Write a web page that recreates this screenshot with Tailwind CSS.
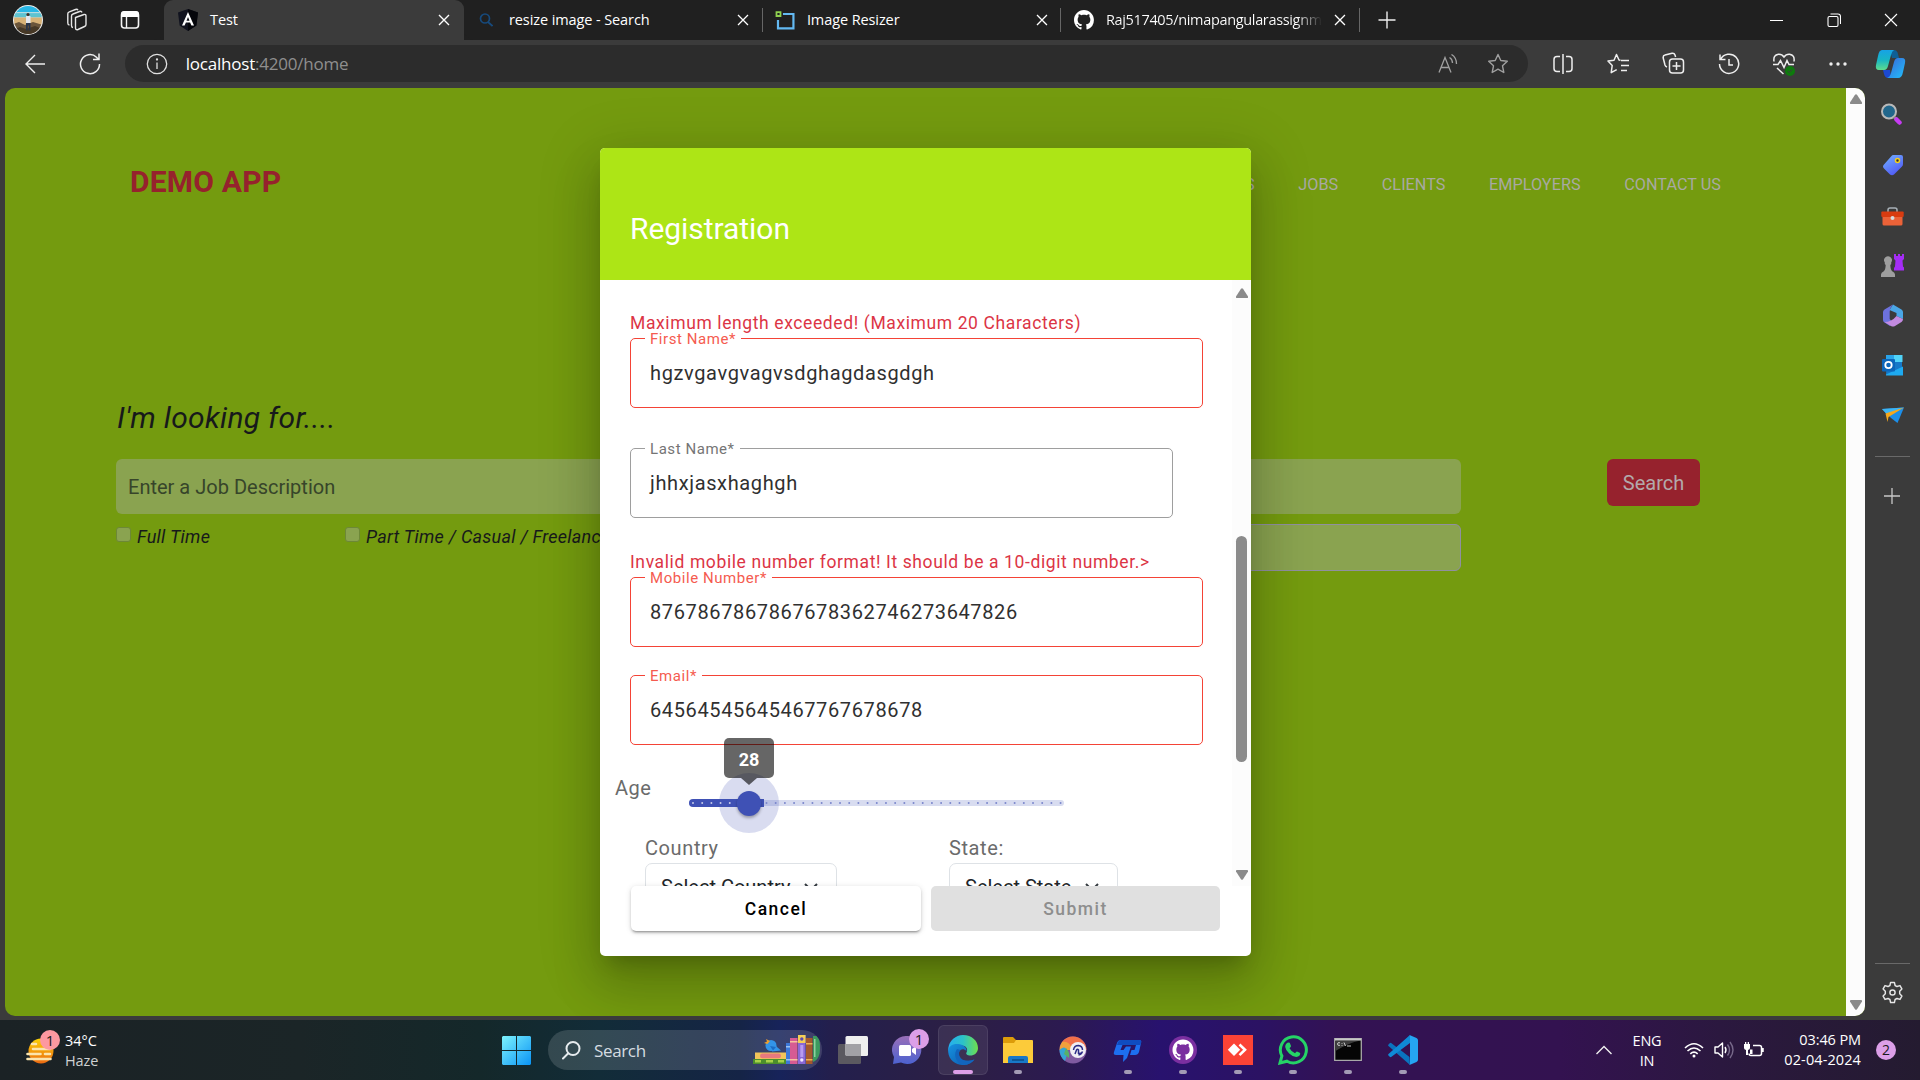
<!DOCTYPE html>
<html lang="en">
<head>
<meta charset="utf-8">
<title>Test</title>
<script src="https://cdn.jsdelivr.net/npm/@tailwindcss/browser@4"></script>
</head>
<body class="w-[1920px] h-[1080px] overflow-hidden flex flex-col bg-[#3b3b3b] font-['Open_Sans',sans-serif] text-white">

<!-- Tab strip -->
<header class="h-10 flex bg-[#202020] text-[14.5px] tracking-[-0.1px] shrink-0">
  <div class="w-[164px] flex items-center pl-[13px] bg-[#202020] rounded-br-[10px]">
    <svg class="w-[30px] h-[30px]" viewBox="0 0 30 30"><defs><clipPath id="av"><circle cx="15" cy="15" r="14"/></clipPath></defs><circle cx="15" cy="15" r="15" fill="#eee"/><g clip-path="url(#av)"><path fill="#28b7e6" d="M0 0h30v11H0z"/><path fill="#b7dbe0" d="M0 7h30v1.500H0z"/><path fill="#5fc3cf" d="M0 8.500h30v4H0z"/><path fill="#d8b277" d="M0 12.500h30v8H0z"/><path fill="#6a553b" d="M0 19l6-2 6 3 8-3 10 3v11H0z"/><path fill="#463826" d="M0 25l7-3 6 2 9-3 8 3v7H0z"/><circle cx="15" cy="9.500" r="1.600" fill="#43302a"/><path fill="#e4e7ef" d="M13 11h4.500v7H13z"/><path fill="#29354a" d="M13 18h4.500v7.500h-1.800v-5h-.9v5H13z"/></g></svg>
    <svg class="w-6 h-6 ml-[22px]" viewBox="0 0 24 24" fill="none" stroke="#e6e6e6" stroke-width="1.400" stroke-linejoin="round"><path d="M10.500 9.500 19 6.500q2-.5 2 1.500v8.500q0 1.500-1.500 2l-6.500 3q-2.500.8-2.500-1.800z"/><path d="M8 19.500q-1.500-.2-1.500-2V8q0-1.500 1.500-2l6.500-2.500q2-.6 2.500 1"/><path d="M4.500 17q-1.700-.2-1.700-2V5.800q0-1.500 1.500-2L10.500 1.500q1.800-.6 2.500.8"/></svg>
    <svg class="w-5 h-5 ml-[31px]" viewBox="0 0 20 20"><rect x="1.500" y="2" width="17" height="16" rx="3" fill="none" stroke="#f4f4f4" stroke-width="1.600"/><path d="M1 7V4q0-3 3-3h12q3 0 3 3v3z" fill="#fff"/><path d="M6.500 7v11" stroke="#f4f4f4" stroke-width="1.400"/></svg>
  </div>
  <div class="w-[300px] bg-[#3b3b3b] rounded-t-[9px] flex items-center pl-3.5">
    <svg class="w-5 h-[22px]" viewBox="0 0 20 22"><path fill="#11131f" d="M10 0l10 3.500-1.600 13L10 22l-8.400-5.500L0 3.500z"/><path fill="#05060b" d="M10 0l10 3.500-1.600 13L10 22z"/><path fill="#fff" fill-rule="evenodd" d="M10 3l6 13.500h-2.600L12.100 13.500H7.900L6.600 16.500H4zm0 5l-1.500 3.700h3z"/></svg>
    <span class="ml-3 w-[228px]">Test</span>
    <svg class="w-3 h-3" viewBox="0 0 12 12" stroke="#fff" stroke-width="1.400"><path d="M1 1l10 10M11 1L1 11"/></svg>
  </div>
  <div class="w-[299px] bg-[#202020] rounded-bl-[10px] flex items-center pl-[15px]">
    <svg class="w-3.5 h-3.5" viewBox="0 0 14 14" fill="none" stroke="#174a7c" stroke-width="1.700"><circle cx="6" cy="5.500" r="4.500"/><path d="M9 9l4.500 4"/></svg>
    <span class="ml-4 w-[228px]">resize image - Search</span>
    <svg class="w-3 h-3" viewBox="0 0 12 12" stroke="#fff" stroke-width="1.300"><path d="M1 1l10 10M11 1L1 11"/></svg>
    <span class="w-px h-6 bg-[#666] ml-[13px]"></span>
  </div>
  <div class="w-[298px] flex items-center pl-3">
    <svg class="w-5 h-5" viewBox="0 0 20 20" fill="none"><path d="M8 4h10.500v14.500H3V10" stroke="#63b9f2" stroke-width="2.200"/><path d="M1.500 2h4v4h-4z" stroke="#8fd14f" stroke-width="1.800"/></svg>
    <span class="ml-3 w-[230px]">Image Resizer</span>
    <svg class="w-3 h-3" viewBox="0 0 12 12" stroke="#fff" stroke-width="1.300"><path d="M1 1l10 10M11 1L1 11"/></svg>
    <span class="w-px h-6 bg-[#666] ml-3"></span>
  </div>
  <div class="w-[299px] flex items-center pl-[13px]">
    <svg class="w-5 h-5" viewBox="0 0 16 16" fill="#fff"><path d="M8 0C3.580 0 0 3.580 0 8c0 3.540 2.290 6.530 5.470 7.590.4.070.55-.17.55-.38 0-.19-.01-.82-.01-1.490-2.010.37-2.530-.49-2.690-.94-.09-.23-.48-.94-.82-1.130-.28-.15-.68-.52-.01-.53.63-.01 1.080.58 1.230.82.72 1.210 1.870.87 2.330.66.070-.52.28-.87.51-1.070-1.780-.2-3.640-.89-3.640-3.950 0-.87.31-1.590.82-2.150-.08-.2-.36-1.020.08-2.120 0 0 .67-.21 2.200.82.64-.18 1.320-.27 2-.27s1.360.09 2 .27c1.530-1.040 2.200-.82 2.200-.82.44 1.100.16 1.920.08 2.120.51.56.82 1.270.82 2.150 0 3.070-1.870 3.750-3.650 3.950.29.25.54.73.54 1.480 0 1.070-.01 1.930-.01 2.200 0 .21.15.46.55.38A8 8 0 0 0 16 8c0-4.420-3.580-8-8-8z"/></svg>
    <span class="ml-3 w-[217px] overflow-hidden whitespace-nowrap tracking-[-0.34px] bg-linear-to-r from-white from-88% to-transparent bg-clip-text text-transparent">Raj517405/nimapangularassignm</span>
    <svg class="w-3 h-3 ml-3" viewBox="0 0 12 12" stroke="#fff" stroke-width="1.300"><path d="M1 1l10 10M11 1L1 11"/></svg>
    <span class="w-px h-6 bg-[#666] ml-[13px]"></span>
  </div>
  <svg class="w-[18px] h-[18px] ml-[18px] mt-[11px]" viewBox="0 0 18 18" stroke="#eee" stroke-width="1.400"><path d="M9 .5v17M.5 9h17"/></svg>
  <div class="ml-auto flex items-center pr-[22px] gap-[43px]">
    <svg class="w-3.5 h-3.5" viewBox="0 0 14 14" stroke="#fff"><path d="M0 7.500h13"/></svg>
    <svg class="w-3.5 h-3.5" viewBox="0 0 14 14" fill="none" stroke="#fff" stroke-width="1.100"><rect x="1" y="3.500" width="10" height="10" rx="1.500"/><path d="M3.500 1h7.500q2.500 0 2.500 2.500V11"/></svg>
    <svg class="w-3.5 h-3.5" viewBox="0 0 14 14" stroke="#fff" stroke-width="1.100"><path d="M1 1l12 12M13 1L1 13"/></svg>
  </div>
</header>

<!-- Address bar -->
<div class="h-12 flex items-center shrink-0 pb-px">
  <div class="w-[70px] flex justify-center"><svg class="w-5 h-5" viewBox="0 0 20 20" fill="none" stroke="#eee" stroke-width="1.400"><path d="M20 10H1M10 1L1 10l9 9"/></svg></div>
  <div class="w-10 flex justify-center"><svg class="w-[22px] h-[22px]" viewBox="0 0 22 22" fill="none" stroke="#eee" stroke-width="1.500"><path d="M20.500 11A9.500 9.500 0 1 1 17.500 4.200L19.500 6.500M20 .5v6h-6"/></svg></div>
  <div class="ml-[15px] w-[1406px] h-[37px] rounded-full bg-[#2c2c2c] flex items-center pl-[21px]">
    <svg class="w-[22px] h-[22px]" viewBox="0 0 22 22" fill="none" stroke="#e0e0e0" stroke-width="1.300"><circle cx="11" cy="11" r="9.700"/><path d="M11 9.500v6.500"/><circle cx="11" cy="6.500" r=".5" fill="#e0e0e0"/></svg>
    <span class="ml-[18px] text-[17px] tracking-[-0.22px]">localhost<span class="text-[#8f8f8f]">:4200/home</span></span>
    <svg class="w-5 h-5 ml-auto" viewBox="0 0 20 20" fill="none" stroke="#a0a0a0" stroke-width="1.300"><path d="M1 18.500L7 3.500l6 15M3 13.500h8M11.500 3.500q3 1.800 3 5.500M13.500.5q5 3 5 9.500"/></svg>
    <svg class="w-[22px] h-[22px] ml-[29px] mr-[19px]" viewBox="0 0 22 22" fill="none" stroke="#a0a0a0" stroke-width="1.400" stroke-linejoin="round"><path d="M11 1.500l2.800 6 6.500.8-4.800 4.500 1.300 6.700L11 16.200l-5.800 3.300 1.300-6.700L1.700 8.300l6.500-.8z"/></svg>
  </div>
  <div class="ml-[7px] grid grid-cols-[repeat(7,55px)] justify-items-center items-center">
    <svg class="w-5 h-[22px]" viewBox="0 0 20 22" fill="none" stroke="#eee" stroke-width="1.500"><path d="M10 1v20M7 3.500H4q-3 0-3 3v9q0 3 3 3h3M13 3.500h3q3 0 3 3v9q0 3-3 3h-3"/></svg>
    <svg class="w-[22px] h-[22px]" viewBox="0 0 22 22" fill="none" stroke="#eee" stroke-width="1.500" stroke-linejoin="round"><path d="M13.500 7.300L12 7 9.500 1.500 7 7.200l-6 .9 4.200 4.400-1 7.200 5.500-3"/><path d="M14 7.500h8M14 12.500h8M14 17.500h6"/></svg>
    <svg class="w-[23px] h-[23px] ml-0.5" viewBox="0 0 23 23" fill="none" stroke="#eee" stroke-width="1.500"><path d="M5 15Q3.500 14.500 3 13L1.200 6Q.8 3.500 3 3L10 1.200Q12.300.8 13 3L13.600 5"/><rect x="7.500" y="7" width="14" height="14" rx="3"/><path d="M14.500 10v8M10.500 14h8"/></svg>
    <svg class="w-[22px] h-[22px] ml-0.5" viewBox="0 0 22 22" fill="none" stroke="#eee" stroke-width="1.500"><path d="M2.500 6.500A9.600 9.600 0 1 1 1.500 11M2 1.500v5h5.500M11 6v6h4"/></svg>
    <svg class="w-6 h-6 ml-0.5" viewBox="0 0 24 24" fill="none" stroke="#eee" stroke-width="1.500"><path d="M2 9.500Q1 3 6.500 2.200 10 2 12 5q2-3 5.500-2.800Q23 3 22 9.500M1 12.500h5l2.500-4 3.500 7 3-7 2 4h5M5 16l6.500 6"/><circle cx="18" cy="19" r="5" fill="#0e7a0d" stroke="none"/><path d="M15.800 19l1.500 1.500 3-3" stroke="#3b3b3b" stroke-width="1"/></svg>
    <svg class="w-5 h-1.5" viewBox="0 0 20 6" fill="#eee"><circle cx="3" cy="3" r="1.700"/><circle cx="10" cy="3" r="1.700"/><circle cx="17" cy="3" r="1.700"/></svg>
    <svg class="w-[31px] h-[30px] mr-1" viewBox="0 0 31 30"><defs><linearGradient id="c1" x2="0" y2="1"><stop stop-color="#17a2e6"/><stop offset=".5" stop-color="#18b5c4"/><stop offset="1" stop-color="#5fdc8c"/></linearGradient><linearGradient id="c2" x2="1" y2="1"><stop stop-color="#3a64d8"/><stop offset="1" stop-color="#21c0fb"/></linearGradient></defs><path fill="#0f5f96" d="M15 1h4q3 0 4 4l1 4h-7z"/><path fill="#1c49d2" d="M8 21h7l1 8h-3q-3 0-4-4z"/><path fill="url(#c1)" d="M7 1h12q-2 1-3 5l-3 11q-1 4-4 4H4q-4 0-3-5L3 7Q4 1 7 1z"/><path fill="url(#c2)" d="M23 9h4q4 0 3 5l-2 9q-1 6-5 6H12q3-1 4-5l3-11q1-4 4-4z"/></svg>
  </div>
</div>

<div class="flex h-[932px] shrink-0 pl-[5px]">
  <!-- Page viewport -->
  <main class="relative w-[1860px] h-[928px] rounded-[10px] overflow-hidden flex bg-[#749b0f] font-[Roboto,sans-serif]">
    <div class="w-[1841px] pl-[111px] pt-[75px]">
      <nav class="h-[38px] flex items-start justify-between pl-[14px] pr-[125px]">
        <h1 class="text-[30px] leading-[38px] font-bold text-[#96222d] tracking-[0.2px]">DEMO APP</h1>
        <ul class="flex gap-[43.500px] mt-2.5 leading-6 text-[16.200px] text-[#a9a9a2] tracking-[0.06px]">
          <li>SERVICES</li><li>JOBS</li><li>CLIENTS</li><li>EMPLOYERS</li><li>CONTACT US</li>
        </ul>
      </nav>
      <h2 class="mt-[198px] pl-px text-[30px] leading-[38px] italic text-[#17191b] tracking-[0.3px]">I'm looking for....</h2>
      <div class="mt-[22px] flex">
        <div class="w-[1345px]">
          <div class="h-[55px] rounded-md bg-[#8aa350] flex items-center pl-3 text-[20px] tracking-[0.01px] text-[#37452a]">Enter a Job Description</div>
          <div class="flex text-[18px] italic text-[#17191b] leading-[24px] tracking-[0.26px]">
            <div class="w-[229px] flex pt-[11px]"><span class="w-[15px] h-[15px] mt-0.5 mr-1.5 rounded-[3px] border border-[#6d8836] bg-[#8aa350]"></span><span>Full Time</span></div>
            <div class="w-[400px] flex pt-[11px]"><span class="w-[15px] h-[15px] mt-0.5 mr-1.5 rounded-[3px] border border-[#6d8836] bg-[#8aa350]"></span><span>Part Time / Casual / Freelance</span></div>
            <div class="flex-1 mt-2.5 h-[47px] rounded-md border border-[#9090a0] bg-[#8aa350]"></div>
          </div>
        </div>
        <div class="ml-[146px] w-[93px] h-[47px] rounded-md bg-[#96222d] text-[#b3a9ab] text-[20px] flex items-center justify-center">Search</div>
      </div>
    </div>
    <div class="w-[19px] bg-[#fcfcfc] flex flex-col items-center justify-between py-1.5">
      <svg class="w-3 h-2.5" viewBox="0 0 12 10" fill="#8a8a8a"><path d="M5 .8q1-1.300 2 0l5 7.700q.3 1.500-1 1.500H1Q-.3 10 0 8.500z"/></svg>
      <svg class="w-3 h-2.5" viewBox="0 0 12 10" fill="#8a8a8a"><path d="M5 9.200q1 1.300 2 0l5-7.700Q12.300 0 11 0H1Q-.3 0 0 1.500z"/></svg>
    </div>

    <!-- Registration dialog -->
    <section class="absolute left-[595px] top-[60px] w-[651px] h-[808px] rounded-[5px] bg-white flex flex-col shadow-[0_14px_19px_-9px_rgba(0,0,0,0.2),0_30px_48px_4px_rgba(0,0,0,0.14),0_11px_58px_10px_rgba(0,0,0,0.12)]">
      <h2 class="h-[132px] rounded-t-[5px] bg-[#ade516] text-white text-[30px] tracking-[-0.05px] pl-[30px] pt-[61px] leading-[40px]">Registration</h2>
      <div class="h-[606px] flex overflow-hidden">
        <form class="w-[632px] pl-[30px] pt-[30px]">
          <p class="h-[26px] leading-[26px] text-[17.500px] tracking-[0.61px] text-[#dc3545]">Maximum length exceeded! (Maximum 20 Characters)</p>
          <div class="relative mt-0.5 w-[573px] h-[70px] border border-[#f44336] rounded-[5px] flex items-center pl-[19px] text-[20px] tracking-[0.625px] text-[#303030]">
            <label class="absolute left-[14px] -top-[5px] h-[10px] leading-[10px] px-[5px] bg-white text-[15px] tracking-[0.56px] text-[#f55b50]">First Name*</label>hgzvgavgvagvsdghagdasgdgh</div>
          <div class="relative mt-10 w-[543px] h-[70px] border border-[#9e9e9e] rounded-[5px] flex items-center pl-[19px] text-[20px] tracking-[0.625px] text-[#303030]">
            <label class="absolute left-[14px] -top-[5px] h-[10px] leading-[10px] px-[5px] bg-white text-[15px] tracking-[0.56px] text-[#757575]">Last Name*</label>jhhxjasxhaghgh</div>
          <p class="mt-[31px] h-[26px] leading-[26px] text-[17.500px] tracking-[0.61px] text-[#dc3545]">Invalid mobile number format! It should be a 10-digit number.&gt;</p>
          <div class="relative mt-0.5 w-[573px] h-[70px] border border-[#f44336] rounded-[5px] flex items-center pl-[19px] text-[20px] tracking-[0.625px] text-[#303030]">
            <label class="absolute left-[14px] -top-[5px] h-[10px] leading-[10px] px-[5px] bg-white text-[15px] tracking-[0.56px] text-[#f55b50]">Mobile Number*</label>8767867867867678362746273647826</div>
          <div class="relative mt-7 w-[573px] h-[70px] border border-[#f44336] rounded-[5px] flex items-center pl-[19px] text-[20px] tracking-[0.625px] text-[#303030]">
            <label class="absolute left-[14px] -top-[5px] h-[10px] leading-[10px] px-[5px] bg-white text-[15px] tracking-[0.56px] text-[#f55b50]">Email*</label>64564545645467767678678</div>
          <div class="-ml-[15px] h-[91px] flex">
            <span class="w-[74px] mt-[31px] h-6 leading-6 text-[20px] tracking-[0.5px] text-[#6b6b6b]">Age</span>
            <div class="relative w-[375px] h-[7px] mt-[55px]">
              <div class="absolute inset-x-0 top-0 h-[6px] rounded-full bg-[#d8dcf0]"></div>
              <div class="absolute left-[30px] -top-[27px] w-[60px] h-[60px] rounded-full bg-[#3f51b5]/20"></div>
              <div class="absolute left-0 -top-px w-[75px] h-2 rounded-l-full bg-[#3f51b5]"></div>
              <svg class="absolute left-0 top-0 w-[375px] h-[6px]" viewBox="0 0 375 6" fill="none" stroke-width="2" stroke-linecap="round"><path d="M4 3h66" stroke="#c5cae9" stroke-dasharray="0 9.190"/><path d="M77.500 3h296" stroke="#7b87cc" stroke-dasharray="0 9.190"/></svg>
              <div class="absolute left-[48px] -top-[9px] w-6 h-[25px] rounded-full bg-[#3f51b5] shadow-[0_2px_3px_rgba(0,0,0,0.3)]"></div>
              <div class="absolute left-[35px] -top-[62px] w-[50px] h-10 rounded-[5px] bg-black/60 text-white text-[18px] font-bold pt-0.5 flex items-center justify-center">28
                <svg class="absolute left-[17px] top-10 w-4 h-[7px] opacity-60" viewBox="0 0 16 7"><path d="M0 0h16L8 7z" fill="#000"/></svg>
              </div>
            </div>
          </div>
          <div class="flex pl-[15px] text-[20px]">
            <div class="w-[304px]">
              <p class="h-6 leading-6 tracking-[0.6px] text-[#6b6b6b]">Country</p>
              <div class="mt-[3px] w-[192px] h-12 border border-[#dee2e6] rounded-[7px] pl-[15px] pt-[11px] leading-6 text-[#212529] flex"><span class="w-[143px]">Select Country</span><svg class="w-[14px] h-2 mt-[8px]" viewBox="0 0 14 8" fill="none" stroke="#343a40" stroke-width="2"><path d="M1 1l6 6 6-6"/></svg></div>
            </div>
            <div>
              <p class="h-6 leading-6 tracking-[0.6px] text-[#6b6b6b]">State:</p>
              <div class="mt-[3px] w-[169px] h-12 border border-[#dee2e6] rounded-[7px] pl-[15px] pt-[11px] leading-6 text-[#212529] flex"><span class="w-[120px]">Select State</span><svg class="w-[14px] h-2 mt-[8px]" viewBox="0 0 14 8" fill="none" stroke="#343a40" stroke-width="2"><path d="M1 1l6 6 6-6"/></svg></div>
            </div>
          </div>
        </form>
        <div class="w-[19px] bg-[#fcfcfc] flex flex-col items-center pt-2">
          <svg class="w-3 h-2.5" viewBox="0 0 12 10" fill="#8a8a8a"><path d="M5 .8q1-1.300 2 0l5 7.700q.3 1.500-1 1.500H1Q-.3 10 0 8.500z"/></svg>
          <div class="mt-[238px] w-[11px] h-[226px] rounded-full bg-[#8b8b8b]"></div>
          <svg class="w-3 h-2.5 mt-[108px]" viewBox="0 0 12 10" fill="#8a8a8a"><path d="M5 9.200q1 1.300 2 0l5-7.700Q12.300 0 11 0H1Q-.3 0 0 1.500z"/></svg>
        </div>
      </div>
      <footer class="flex gap-2.5 pl-[31px] text-[17.500px] font-medium tracking-[1.5px]">
        <button class="w-[290px] h-[45px] pt-0.5 rounded-[5px] bg-white text-black shadow-[0_3px_2px_-2px_rgba(0,0,0,0.25),0_2px_3px_rgba(0,0,0,0.16),0_1px_6px_rgba(0,0,0,0.12)]">Cancel</button>
        <button class="w-[289px] h-[45px] pt-0.5 rounded-[5px] bg-[#e0e0e0] text-[#8e8e8e]">Submit</button>
      </footer>
    </section>
  </main>

  <!-- Edge sidebar -->
  <aside class="w-[55px] flex flex-col items-center pt-0.5">
    <div class="grid auto-rows-[50px] place-items-center">
      <svg class="w-[22px] h-[22px] mr-1 mb-0.5" viewBox="0 0 22 22"><circle cx="9" cy="8.500" r="7" fill="#22678c" stroke="#b9b9b9" stroke-width="2"/><path d="M14 14l3 3" stroke="#8a8a8a" stroke-width="3"/><path d="M16.500 16.500l3 3" stroke="#c63bf2" stroke-width="4.500" stroke-linecap="round"/></svg>
      <svg class="w-[22px] h-[22px]" viewBox="0 0 22 22"><defs><linearGradient id="tg" x2=".6" y2="1"><stop stop-color="#72b4ff"/><stop offset="1" stop-color="#515af5"/></linearGradient></defs><path fill="url(#tg)" d="M11.500 1H19q2 0 2 2v7q0 1.500-1 2.500l-8 8q-2 1.500-4 0L2 14.500q-2-2 0-4L9.500 2Q10 1 11.500 1z"/><circle cx="15.500" cy="6.500" r="2" fill="#333" stroke="#f4cf1e" stroke-width="1.500"/></svg>
      <svg class="w-[23px] h-[20px] mt-1" viewBox="0 0 23 20"><path d="M7 5V3q0-2 2-2h5q2 0 2 2v2" fill="none" stroke="#a8b0b6" stroke-width="1.500"/><rect x="1.500" y="9" width="20" height="9.500" rx="1.500" fill="#eb6238"/><rect x=".3" y="4.500" width="22.400" height="5.500" rx="1" fill="#d83b10"/><circle cx="11.500" cy="11" r="2" fill="#d5dbe0"/></svg>
      <svg class="w-[23px] h-[23px]" viewBox="0 0 23 23"><path fill="#a42df5" d="M13 0h2v2h2V0h2v2h2V0h2v5l-1.500 1.500.5 6 1.500 1.500v2.500H13V14l1-1.500.5-6L13 5z"/><path fill="#9e9e9e" d="M3.800 8.500a3.900 3.900 0 1 1 6.400 0v1.500l-.9 1q.2 5 1.900 6.200 2.800 1.300 2.800 3.300V23H0v-2.500q0-2 2.800-3.300Q4.500 16 4.700 11l-.9-1z"/></svg>
      <svg class="w-[22px] h-[23px]" viewBox="0 0 22 23"><path fill="#4aa6e6" d="M11 .5l8.500 5Q21 6.500 21 8v7L14.500 12V9L7.500 6z"/><path fill="#6d72de" d="M11 .5Q8 3.500 7.700 7.500V15l3.300 4-3 3-5.500-3.500Q1 17.500 1 16V8q0-1.500 1.500-2.500z"/><path fill="#c38be0" d="M21 15q0 2-1.500 3L13 22q-2 1-4 0l-6.500-4q7 0 12-6z"/></svg>
      <svg class="w-[21px] h-[21px]" viewBox="0 0 21 21"><path fill="#1678c8" d="M5 1h15v19H4z"/><path fill="#50d3f8" d="M11 0h9.500v7H11z"/><path fill="#2aa3e8" d="M4 0h8v7H4z"/><path fill="#1eaaf0" d="M4 19.500l17-8v9H4z"/><rect y="4" width="13" height="12.500" rx="1" fill="#0c66ba"/><circle cx="6.500" cy="10" r="3.200" fill="none" stroke="#fff" stroke-width="1.800"/></svg>
      <svg class="w-[22px] h-[18px]" viewBox="0 0 22 18"><path fill="#1c8fea" d="M0 3L22 1.500 15.500 17 9 12z"/><path fill="#3cb4f4" d="M0 3L22 1.500 5 8.500z"/><path fill="#f6a81c" d="M3.500 7.500L22 1.500 6.500 11 5.500 16z"/></svg>
    </div>
    <div class="w-[35px] h-px bg-[#696969] mt-[16px]"></div>
    <svg class="w-4 h-4 mt-[31px] mr-px" viewBox="0 0 16 16" stroke="#c8c8c8" stroke-width="1.300"><path d="M8 0v16M0 8h16"/></svg>
    <div class="w-[35px] h-px bg-[#696969] mt-auto"></div>
    <svg class="w-[23px] h-[23px] mt-[17px] mb-4" viewBox="0 0 24 24" fill="none" stroke="#e6e6e6" stroke-width="1.500" stroke-linejoin="round"><path d="M10 1.500h4l.7 3.200 2 1.100 3.100-1 2 3.500-2.300 2.300v2.800l2.300 2.300-2 3.500-3.100-1-2 1.100-.7 3.200h-4l-.7-3.200-2-1.100-3.100 1-2-3.500 2.300-2.300v-2.800L2.200 8.300l2-3.500 3.100 1 2-1.100z"/><circle cx="12" cy="12" r="2.700"/></svg>
  </aside>
</div>

<!-- Taskbar -->
<footer class="relative h-[60px] shrink-0 flex items-center bg-[linear-gradient(90deg,#1b2225_0px,#1b2527_300px,#14282a_480px,#122c38_600px,#152446_740px,#17235a_780px,#231f4d_830px,#2c1f44_960px,#2c1a50_1060px,#28126e_1160px,#2b1263_1260px,#331253_1340px,#331250_1560px,#2b183f_1720px,#241b30_1920px)] text-[14.500px]">
  <div class="w-[502px] flex items-center pl-[26px]">
    <svg class="w-9 h-[38px] -mt-[7px]" viewBox="0 0 36 38"><defs><linearGradient id="sn" x2="0" y2="1"><stop stop-color="#fbd106"/><stop offset="1" stop-color="#ec6a12"/></linearGradient></defs><circle cx="15" cy="23" r="12.500" fill="url(#sn)"/><path d="M6 16h4M7 21h17M1.500 26h13M19 26h5M1.500 31h23" stroke="#fbe4ad" stroke-width="2.600" stroke-linecap="round"/><circle cx="24" cy="12" r="10" fill="#fd98a0"/><text x="24" y="17.500" font-size="15" text-anchor="middle" fill="#1a1a1a">1</text></svg>
    <div class="ml-[3px] mt-0.5 leading-5"><div>34°C</div><div class="text-[#cfd2d3] tracking-[-0.1px]">Haze</div></div>
  </div>
  <svg class="w-[29px] h-[29px]" viewBox="0 0 29 29"><defs><linearGradient id="wn" x2="1" y2="1"><stop stop-color="#7df3fd"/><stop offset="1" stop-color="#0a93f5"/></linearGradient></defs><path fill="url(#wn)" d="M1 0h13v14H0V1zM15 0h13l1 1v13H15zM0 15h14v14H1l-1-1zM15 15h14v13l-1 1H15z"/></svg>
  <div class="ml-[17px] w-[274px] h-10 rounded-full bg-white/14 flex items-center pl-[14px] overflow-hidden">
    <svg class="w-[19px] h-[19px]" viewBox="0 0 19 19" fill="none" stroke="#e6ebee" stroke-width="2"><circle cx="11" cy="7.500" r="6.500"/><path d="M6 12.500L1 17.500" stroke-linecap="round"/></svg>
    <span class="ml-[13px] mt-0.5 text-[17px] tracking-[-0.35px] text-[#d5dce1]">Search</span>
    <svg class="w-[68px] h-[32px] ml-auto mr-px" viewBox="0 0 68 32"><path fill="#4c8f2c" d="M0 25h33v5H0z"/><path fill="#a6d24a" d="M2 26h6v2.500H2zM13 26h7v2.500h-7zM25 26h6v2.500h-6z"/><path fill="#f2c45a" d="M2 18.500h31v6.500H2z"/><rect x="7" y="19.500" width="21" height="4.800" rx="2.400" fill="#e8797d"/><circle cx="18" cy="11.500" r="5.500" fill="#3394e8"/><path fill="#3394e8" d="M19 7l5 6 4 3.500-9 1z"/><path fill="#1c6cc4" d="M17 12l6 1-3 3.500z"/><path fill="#f0a02c" d="M14.500 10l-3.500-1 3-1.500L13 5l4 2z"/><path fill="#3d78d8" d="M33 9h4v21h-4z"/><path fill="#9cc4f4" d="M33 12h4v1.500h-4zM33 25h4v1.500h-4z"/><path fill="#d65b93" d="M37 4h7.500v26H37z"/><path fill="#f6c3a0" d="M37 7h7.500v1.500H37zM37 25h7.500v1.500H37z"/><path fill="#8a68d6" d="M45 1h7.500v29H45z"/><path fill="#f4cf56" d="M45 1h7.500v8H45z"/><circle cx="48.800" cy="5" r="1.700" fill="#5c48b0"/><path fill="#b79bf0" d="M47.300 11h3v12h-3z"/><circle cx="48.800" cy="26" r="1.700" fill="#f0e4ff"/><path fill="#a5592c" d="M53 4h6.500v26H53z"/><path fill="#eeb052" d="M53 9h6.500v1.500H53zM53 25h6.500v1.500H53z"/><path fill="#3c9a5f" d="M60 2h4q3 2 3 12t-5 13l-2 1z"/><path fill="#8fd0a0" d="M61 5h1.500v18H61z"/></svg>
  </div>
  <div class="ml-[3px] grid grid-cols-[repeat(11,55px)] h-[60px] items-center justify-items-center">
    <svg class="w-[30px] h-7" viewBox="0 0 30 28"><rect y="8" width="23" height="20" rx="1.500" fill="#5b5960"/><rect x="7.500" width="22.500" height="20" rx="1.500" fill="#efefef"/><path fill="#a2a1a6" d="M8 8h15v12H8z"/></svg>
    <svg class="w-[38px] h-[38px] ml-[6px] -mt-[8px]" viewBox="0 0 38 38"><defs><linearGradient id="ch" x2="0" y2="1"><stop stop-color="#9a6fb8"/><stop offset="1" stop-color="#4c62d0"/></linearGradient></defs><path fill="url(#ch)" d="M15 9a14 14 0 1 1-6 26.500L1 37l1-7A14 14 0 0 1 15 9z"/><rect x="7" y="18" width="12" height="11" rx="1.500" fill="#fff"/><path fill="#fff" d="M20 22l4-3v9l-4-3z"/><circle cx="27" cy="12" r="10" fill="#dc9fe8"/><text x="27" y="17.500" font-size="15" text-anchor="middle" fill="#1a1a1a">1</text></svg>
    <div class="w-[50px] h-[50px] rounded-[6px] bg-white/8 border border-white/8 flex flex-col items-center pt-[9px]">
      <svg class="w-[30px] h-[30px]" viewBox="0 0 30 30"><defs><linearGradient id="e1" x2="1"><stop stop-color="#25aef0"/><stop offset=".5" stop-color="#2cc2c8"/><stop offset="1" stop-color="#6fe04c"/></linearGradient><linearGradient id="e2" x2="1" y2="1"><stop stop-color="#1693e0"/><stop offset="1" stop-color="#0c57ac"/></linearGradient></defs><path fill="url(#e1)" d="M.3 13A15 15 0 0 1 15 0C24 0 30 6 30 13c0 5-4 7.500-7.500 7.500-3.500 0-5-1.500-4-3 2-3.500-.5-7-5-7C7 10.500 1.500 12 .3 17z"/><path fill="url(#e2)" d="M.2 17C0 11 5 8.500 10 9c5 .3 9 3.500 8.500 7C14 12 9.500 16 11 21c1.500 5 8 6 15.500 3.500C24 28 20 30 15 30 7 30 .8 24.500.2 17z"/><path fill="#1265bd" d="M9 14c-4 6-1 13 5 16 6 .3 10-2 12.500-5.500-6.500 2.500-13 1.500-15-3.500-1-3 0-5 1-6z"/></svg>
      <span class="w-5 h-1 rounded-full bg-[#dd9fe8] mt-[5px]"></span>
    </div>
    <div class="h-[60px] pt-[15px] flex flex-col items-center"><svg class="w-[30px] h-[30px]" viewBox="0 0 30 30"><path fill="#dc9c0a" d="M0 3q0-1 1-1h9l3 3h16v6H0z"/><path fill="#fccb3a" d="M0 8h11l2-3h16q1 0 1 1v22H0z"/><path fill="#1878c8" d="M5 28v-5q0-2 2-2h16q2 0 2 2v5z"/><path d="M9 25h12" stroke="#0b4c86" stroke-width="1.500"/></svg><span class="w-2 h-1 rounded-full bg-[#a39bb5] mt-[5px]"></span></div>
    <div class="h-[60px] pt-[16px] flex flex-col items-center"><svg class="w-7 h-7" viewBox="0 0 28 28"><circle cx="14" cy="14" r="13.500" fill="#7f5aa0"/><path fill="#f0704a" d="M14 .5A13.500 13.500 0 0 1 27.500 14L14 14 3 6A13.500 13.500 0 0 1 14 .5z"/><path fill="#f2a03c" d="M3 6q7-2 11 8H.5Q.6 9 3 6z"/><path fill="#35a5d5" d="M.5 14Q6 8 9 16L6 25Q.8 21 .5 14z"/><path fill="#57b06a" d="M7 12q4 4 3 10l-5-4z"/><circle cx="19" cy="14" r="8" fill="#f0eef4"/><path d="M14.500 14q.5-4.500 5-4.500 4 .5 4 4.500M16 18l1.500-4q1-1.500 2 0v3.500q1.500 1 2-1M23.500 15.500q-1 3-4 3.500" fill="none" stroke="#2c2c86" stroke-width="1.500"/></svg></div>
    <div class="h-[60px] pt-[15px] flex flex-col items-center"><svg class="w-[30px] h-[30px]" viewBox="0 0 30 30"><path fill="#1d6ff0" fill-rule="evenodd" d="M8 5h18q3 0 2 3l-2 9q-1 3-4 3h-5l1.500-5h3l1.500-5H9.500l-2 5h3l2.500-3.500h5L14 23l-4 4 .5-7H3q-3 0-2-3L4 8q1-3 4-3z"/><path fill="#0f4cc0" d="M8 5h18q3 0 2 3l-.5 2H4L5 7q1-2 3-2z"/></svg><span class="w-2 h-1 rounded-full bg-[#a39bb5] mt-[5px]"></span></div>
    <div class="h-[60px] pt-[16px] flex flex-col items-center"><svg class="w-7 h-7" viewBox="0 0 28 28"><circle cx="14" cy="14" r="14" fill="#7a2fa0"/><g transform="translate(3.500 3.500) scale(1.310)" fill="#fff"><path d="M8 0C3.580 0 0 3.580 0 8c0 3.540 2.290 6.530 5.470 7.590.4.070.55-.17.55-.38 0-.19-.01-.82-.01-1.490-2.010.37-2.530-.49-2.690-.94-.09-.23-.48-.94-.82-1.130-.28-.15-.68-.52-.01-.53.63-.01 1.080.58 1.230.82.72 1.210 1.870.87 2.330.66.070-.52.28-.87.51-1.070-1.780-.2-3.640-.89-3.640-3.950 0-.87.31-1.590.82-2.150-.08-.2-.36-1.020.08-2.120 0 0 .67-.21 2.200.82.64-.18 1.320-.27 2-.27s1.360.09 2 .27c1.530-1.040 2.200-.82 2.200-.82.44 1.100.16 1.920.08 2.120.51.56.82 1.270.82 2.150 0 3.070-1.870 3.750-3.650 3.950.29.25.54.73.54 1.480 0 1.070-.01 1.930-.01 2.200 0 .21.15.46.55.38A8 8 0 0 0 16 8c0-4.420-3.580-8-8-8z"/></g></svg><span class="w-2 h-1 rounded-full bg-[#a39bb5] mt-[6px]"></span></div>
    <div class="h-[60px] pt-[15px] flex flex-col items-center"><svg class="w-[30px] h-[30px]" viewBox="0 0 30 30"><path fill="#fb4336" d="M0 0h30v30H0z"/><path fill="#fff" d="M11 8.500l6.200 6.300L11 21l-6.200-6.200z"/><path d="M16.500 9.500l5.500 5.300-5.500 5.300" stroke="#fff" stroke-width="2.600" fill="none"/></svg><span class="w-2 h-1 rounded-full bg-[#a39bb5] mt-[5px]"></span></div>
    <div class="h-[60px] pt-[15px] flex flex-col items-center"><svg class="w-[30px] h-[30px]" viewBox="0 0 30 30"><path d="M2 28l1.900-7A13 13 0 1 1 9 26.200z" fill="none" stroke="#25d366" stroke-width="3"/><path fill="#25d366" d="M10 7.500l1.700.2q.8 1.700 1.300 3.200.1.700-1.500 2.300 2 3.700 5.500 5 1.400-1.900 2-1.800l3.200 1.600q.3 3.500-4 4-3.300 0-7-3.500t-4-6.500q0-3.500 2.800-4.500z"/></svg><span class="w-2 h-1 rounded-full bg-[#a39bb5] mt-[5px]"></span></div>
    <div class="h-[60px] pt-[18px] flex flex-col items-center"><svg class="w-7 h-[23px]" viewBox="0 0 28 23"><path fill="#050505" stroke="#a8a8a8" stroke-width="1.300" d="M.7.7h26.600v21.600H.7z"/><path fill="#3c3c3c" d="M1.500 2.500h25Q14 5 1.500 13z"/><path fill="#c8c8c8" d="M1 .5h26v2H1z"/><path d="M6 4.800Q3.500 4 3.500 6t2.500 1.300M8 5v.8M8 7v.8M10 4.500l1.500 3.500M13 8h4" stroke="#ddd" fill="none" stroke-width=".9"/></svg><span class="w-2 h-1 rounded-full bg-[#a39bb5] mt-[9px]"></span></div>
    <div class="h-[60px] pt-[15px] flex flex-col items-center"><svg class="w-[30px] h-[30px]" viewBox="0 0 30 30"><path fill="#0a73be" d="M22 0L9 12.500 3.500 8.200Q2.500 7.500 1.700 8.200L.5 9.400q-.8.8 0 1.600L22 30l-.5-8L9.500 12.800z"/><path fill="#0f8ad6" d="M.5 19Q-.3 19.800.5 20.600l1.200 1.200q.8.700 1.800 0L22 8V0z"/><path fill="#25a5f2" d="M21.500 0l7 3q1.500.7 1.500 2.300v19.400q0 1.600-1.500 2.300l-7 3q.5-.5.5-2V2q0-1.500-.5-2z"/></svg><span class="w-2 h-1 rounded-full bg-[#a39bb5] mt-[5px]"></span></div>
  </div>
  <div class="ml-auto flex items-center pr-6">
    <svg class="w-4 h-2.5 mr-[-1px]" viewBox="0 0 16 10" fill="none" stroke="#f0f0f0" stroke-width="1.400"><path d="M.5 9L8 1.500 15.500 9"/></svg>
    <div class="ml-5 mt-0.5 w-[32px] text-center leading-5 tracking-[-0.2px]"><div>ENG</div><div>IN</div></div>
    <svg class="w-5 h-4 ml-[21px]" viewBox="0 0 20 16" fill="none" stroke="#fff" stroke-width="1.600"><path d="M1 6q9-8.500 18 0M3.500 9q6.500-6 13 0M6.300 11.800q3.700-3.300 7.400 0"/><circle cx="10" cy="14" r="1.500" fill="#fff" stroke="none"/></svg>
    <svg class="w-5 h-[18px] ml-[10px]" viewBox="0 0 20 18" fill="none" stroke="#fff" stroke-width="1.400"><path d="M1 6h3l4.500-4v14L4 12H1z" stroke-linejoin="round"/><path d="M11 6q2 3 0 6"/><path d="M13.500 3.500q4 5.500 0 11M16 1q6 8 0 16" stroke="#77698a"/></svg>
    <svg class="w-5 h-[18px] ml-[10px]" viewBox="0 0 20 18" fill="none" stroke="#fff" stroke-width="1.500"><path d="M9 4.500h6.500q2 0 2 2v6q0 2-2 2H7q-2 0-2-2M19 7v4"/><path fill="#fff" stroke="none" d="M0 3h6v4q0 1.500-2 2v5H2V9Q0 8.500 0 7zM1 1h1.300v2H1zM3.700 1H5v2H3.700zM6 8.500h2.500V13H6z"/></svg>
    <div class="ml-[17px] w-[80px] text-right leading-5 whitespace-nowrap"><div class="tracking-[-0.1px]">03:46 PM</div><div class="tracking-[0.1px]">02-04-2024</div></div>
    <div class="ml-[15px] w-5 h-5 rounded-full bg-[#dc9fe8] text-[#1a1a1a] text-[14px] leading-5 text-center">2</div>
  </div>
</footer>
</body>
</html>
